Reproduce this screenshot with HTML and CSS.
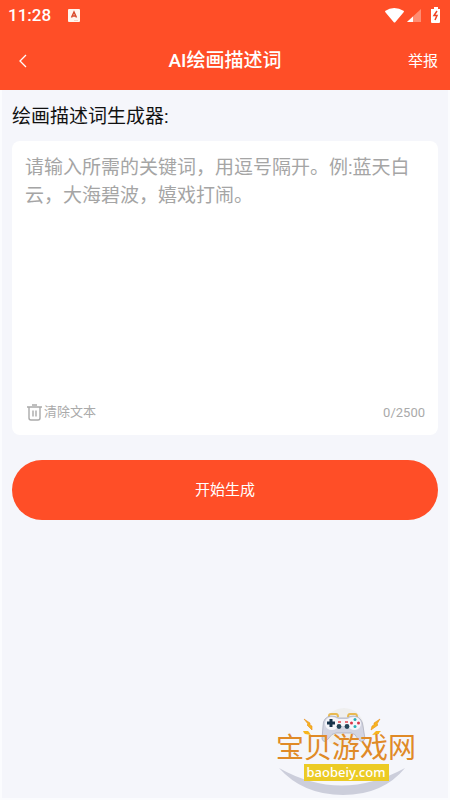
FILE: index.html
```html
<!DOCTYPE html>
<html lang="zh-CN">
<head>
<meta charset="utf-8">
<meta name="viewport" content="width=device-width, initial-scale=1">
<title>AI绘画描述词</title>
<link rel="stylesheet" href="styles.css">
</head>
<body>
<header class="top">
  <div class="status">
    <span class="clock">11:28</span>
    <svg class="input-icon" viewBox="0 0 12 13" aria-hidden="true">
      <rect width="12" height="13" rx="1" fill="#fff5ee"/>
      <path d="M3.500 8.500 6 3 8.500 8.500M4.500 7h3" fill="none" stroke="#d94a2c" stroke-width="1.500"/>
      <path d="M6 11.500h4" stroke="#f8d5c8" stroke-width="1"/>
    </svg>
    <svg class="signals" viewBox="0 0 58 18" aria-hidden="true">
      <path d="M1 5Q10-1 20 5Q20 6 19 7L11 16.500H10L2 7Q1 6 1 5Z" fill="#fff"/>
      <path d="M37 3V16H23Z" fill="#ff8d72"/>
      <path d="M29 10.500V16H23Z" fill="#fff"/>
      <path d="M50 1h4v2h2v13q0 1-1 1h-7q-1 0-1-1V3h3Z" fill="#fff"/>
      <path d="M53 5l-3 4.500h3l-2 4.500" fill="none" stroke="#f04424" stroke-width="1.500"/>
    </svg>
  </div>
  <nav class="bar">
    <button class="back" type="button" aria-label="返回">
      <svg viewBox="0 0 9 14" aria-hidden="true"><path d="M8 1 2 7l6 6" fill="none" stroke="#fff" stroke-width="1.300"/></svg>
    </button>
    <h1 class="title">AI绘画描述词</h1>
    <a class="report" href="#">举报</a>
  </nav>
</header>
<main class="page">
  <label class="label" for="prompt">绘画描述词生成器:</label>
  <section class="card">
    <textarea class="prompt" id="prompt" maxlength="2500" placeholder="请输入所需的关键词，用逗号隔开。例:蓝天白云，大海碧波，嬉戏打闹。"></textarea>
    <div class="tools">
      <button class="clear" type="button">
        <svg viewBox="0 0 15 17" aria-hidden="true"><path d="M0 3h15M5 1h5M2 3v11q0 2 2 2h7q2 0 2-2V3M6 6.500v6M9 6.500v6" fill="none" stroke="#aaa" stroke-width="1.400"/></svg>
        <span>清除文本</span>
      </button>
      <span class="count">0/2500</span>
    </div>
  </section>
  <button class="submit" type="button">开始生成</button>
  <footer class="brand">
    <svg class="art" viewBox="-2 0 142 90" aria-hidden="true">
      <circle cx="67" cy="20" r="20" fill="#efefef"/>
      <path d="M2 60Q64 95 128 60Q106 87 66 87Q26 87 2 60Z" fill="#cccedb"/>
      <g transform="translate(-2 0)">
        <path d="M54 9v-1q0-2 2-2h5q2 0 2 3M73 9q0-3 2-3h5q2 0 2 3" fill="none" stroke="#e8b951" stroke-width="2"/>
        <path d="M56 8Q48 9 48 18L47 31Q49 36 53 31Q57 25 61 25H76Q80 25 83 31Q87 36 90 31L88 18Q87 9 79 8Q74 8 72 10H64Q60 8 56 8Z" fill="#d3d5e2" stroke="#a7aaba" stroke-width="0.700"/>
        <path d="M56 9q-6 1-6 7 1 6 7 6 5 0 6-4h10q2 4 7 4 6-1 6-7-1-6-7-6-4 0-6 2H63q-3-2-7-2Z" fill="#f5f5fa"/>
        <path d="M56 11v8M52 15h8" stroke="#17334b" stroke-width="3"/>
        <circle cx="64" cy="18.500" r="2.400" fill="#254559"/>
        <circle cx="72" cy="18.500" r="2.400" fill="#254559"/>
        <path d="M63 14h3M70 14h3" stroke="#e34851" stroke-width="1.300"/>
        <circle cx="80" cy="11.500" r="1.500" fill="#28aeb8"/>
        <circle cx="76.500" cy="15" r="1.500" fill="#da3548"/>
        <circle cx="83.500" cy="15" r="1.500" fill="#da3548"/>
        <circle cx="80" cy="18.500" r="1.500" fill="#28aeb8"/>
      </g>
      <path d="M27 11l6 4 0 2 2 1 0 4-5-5 1-1Z" fill="#f7b51d" stroke="#e78d1e" stroke-width="0.600"/>
      <path d="M103 11l-6 4 0 2-2 1-1 4 7-5-1-1Z" fill="#f7b51d" stroke="#e78d1e" stroke-width="0.600"/>
      <path d="M26 23l5 0 1 1 2 3-6-1-1-1ZM104 23l-5 0-1 1-3 3 7-1 0-1Z" fill="#f7b51d"/>
    </svg>
    <span class="brand-name">宝贝游戏网</span>
    <span class="brand-url">baobeiy.com</span>
  </footer>
</main>
</body>
</html>
```
FILE: styles.css
```css
* {
  box-sizing: border-box;
}

body {
  display: flex;
  flex-direction: column;
  min-height: 100vh;
  margin: 0;
  background: #f5f6fb;
  font-family: Roboto, "Noto Sans CJK SC", sans-serif;
  font-size: 15px;
}

button {
  padding: 0;
  border: 0;
  background: none;
  font: inherit;
  cursor: pointer;
}

svg {
  display: block;
}

.top {
  background: #ff4e27;
  color: #fff;
}

.status {
  display: flex;
  align-items: center;
  height: 30px;
  padding: 0 8px;
}

.clock {
  font-size: 17px;
  font-weight: 500;
  line-height: 30px;
}

.input-icon {
  width: 12px;
  height: 13px;
  margin-left: 17px;
}

.signals {
  width: 58px;
  height: 18px;
  margin-left: auto;
}

.bar {
  display: grid;
  grid-template-columns: 1fr auto 1fr;
  align-items: center;
  height: 60px;
  padding: 2px 12px 0;
}

.back {
  justify-self: start;
  padding: 6px;
}

.back svg {
  width: 9px;
  height: 14px;
}

.title {
  margin: 0;
  font-size: 19px;
  font-weight: 500;
  line-height: 26px;
}

.report {
  justify-self: end;
  color: #fff;
  line-height: 20px;
  text-decoration: none;
}

.page {
  display: flex;
  flex: 1;
  flex-direction: column;
  padding: 13px 10px 0;
  border: solid #fbfcfe;
  border-width: 0 2px 2px;
}

.label {
  color: #111;
  font-size: 19px;
  line-height: 28px;
}

.card {
  display: flex;
  flex-direction: column;
  margin-top: 10px;
  padding: 13px;
  border-radius: 8px;
  background: #fff;
}

.prompt {
  width: 100%;
  height: 248px;
  padding: 0;
  border: 0;
  outline: 0;
  background: none;
  color: #333;
  font-family: inherit;
  font-size: 19px;
  line-height: 28px;
  resize: none;
}

.prompt::placeholder {
  color: #a5a5a5;
}

.tools {
  display: flex;
  align-items: center;
  justify-content: space-between;
  height: 20px;
  color: #aaa;
  font-size: 13px;
}

.clear {
  display: flex;
  align-items: center;
  gap: 2px;
  padding-left: 2px;
  color: #aaa;
  line-height: 18px;
}

.clear svg {
  width: 15px;
  height: 17px;
}

.submit {
  height: 60px;
  margin-top: 25px;
  border-radius: 30px;
  background: #ff4e27;
  color: #fff;
  line-height: 20px;
}

.brand {
  display: grid;
  grid-template-rows: 28px 26px 19px 17px;
  justify-items: center;
  align-self: flex-end;
  width: 138px;
  margin-top: auto;
  margin-right: 25px;
}

.art {
  grid-area: 1 / 1 / 5 / 2;
  width: 142px;
  height: 90px;
}

.brand-name {
  grid-area: 2 / 1;
  color: #e08a27;
  font-size: 28px;
  line-height: 26px;
  white-space: nowrap;
}

.brand-url {
  grid-area: 3 / 1;
  align-self: end;
  padding: 0 3px;
  background: #eccb24;
  color: #fff;
  font-family: "Noto Sans", sans-serif;
  font-size: 13px;
  font-weight: 500;
  line-height: 17px;
}
```
